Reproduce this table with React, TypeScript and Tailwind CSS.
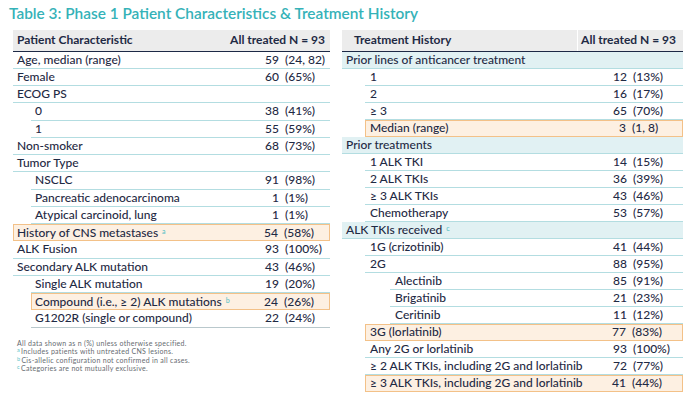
import React from "react";

type Row = {
  label: string;
  n?: string;
  p?: string;
  indent?: 0 | 1 | 2;
  hl?: boolean;
  group?: boolean;
  sup?: string;
};

const leftRows: Row[] = [
  { label: "Age, median (range)", n: "59", p: "(24, 82)" },
  { label: "Female", n: "60", p: "(65%)" },
  { label: "ECOG PS" },
  { label: "0", n: "38", p: "(41%)", indent: 1 },
  { label: "1", n: "55", p: "(59%)", indent: 1 },
  { label: "Non-smoker", n: "68", p: "(73%)" },
  { label: "Tumor Type" },
  { label: "NSCLC", n: "91", p: "(98%)", indent: 1 },
  { label: "Pancreatic adenocarcinoma", n: "1", p: "(1%)", indent: 1 },
  { label: "Atypical carcinoid, lung", n: "1", p: "(1%)", indent: 1 },
  { label: "History of CNS metastases", sup: "a", n: "54", p: "(58%)", hl: true },
  { label: "ALK Fusion", n: "93", p: "(100%)" },
  { label: "Secondary ALK mutation", n: "43", p: "(46%)" },
  { label: "Single ALK mutation", n: "19", p: "(20%)", indent: 1 },
  { label: "Compound (i.e., \u2265 2) ALK mutations", sup: "b", n: "24", p: "(26%)", indent: 1, hl: true },
  { label: "G1202R (single or compound)", n: "22", p: "(24%)", indent: 1 },
];

const rightRows: Row[] = [
  { label: "Prior lines of anticancer treatment", group: true },
  { label: "1", n: "12", p: "(13%)", indent: 1 },
  { label: "2", n: "16", p: "(17%)", indent: 1 },
  { label: "\u2265 3", n: "65", p: "(70%)", indent: 1 },
  { label: "Median (range)", n: "3", p: "(1, 8)", indent: 1, hl: true },
  { label: "Prior treatments", group: true },
  { label: "1 ALK TKI", n: "14", p: "(15%)", indent: 1 },
  { label: "2 ALK TKIs", n: "36", p: "(39%)", indent: 1 },
  { label: "\u2265 3 ALK TKIs", n: "43", p: "(46%)", indent: 1 },
  { label: "Chemotherapy", n: "53", p: "(57%)", indent: 1 },
  { label: "ALK TKIs received", sup: "c", group: true },
  { label: "1G (crizotinib)", n: "41", p: "(44%)", indent: 1 },
  { label: "2G", n: "88", p: "(95%)", indent: 1 },
  { label: "Alectinib", n: "85", p: "(91%)", indent: 2 },
  { label: "Brigatinib", n: "21", p: "(23%)", indent: 2 },
  { label: "Ceritinib", n: "11", p: "(12%)", indent: 2 },
  { label: "3G (lorlatinib)", n: "77", p: "(83%)", indent: 1, hl: true },
  { label: "Any 2G or lorlatinib", n: "93", p: "(100%)", indent: 1 },
  { label: "\u2265 2 ALK TKIs, including 2G and lorlatinib", n: "72", p: "(77%)", indent: 1 },
  { label: "\u2265 3 ALK TKIs, including 2G and lorlatinib", n: "41", p: "(44%)", indent: 1, hl: true },
];

function Sup({ s }: { s?: string }) {
  if (!s) return null;
  return (
    <span className="ml-[4px] text-[7px] leading-[7px] text-[#5cc3c8] relative top-[-3px]">{s}</span>
  );
}

function LeftRow({ r, last }: { r: Row; last: boolean }) {
  const indentCls = r.indent === 1 ? "ml-[18px]" : "ml-0";
  const boxCls = r.hl
    ? "border border-[#f3c188] bg-[#fdf0e2]"
    : last
    ? "border-b border-[#b9c8cc]"
    : "border-b border-[#b3dde1]";
  return (
    <div className={`flex items-center h-[17.25px] ${indentCls} ${boxCls}`}>
      <div className={`flex-1 ${r.hl ? "pl-[3px]" : "pl-[4px]"} whitespace-nowrap`}>
        {r.label}
        <Sup s={r.sup} />
      </div>
      <div className="text-right">{r.n}</div>
      <div className="w-[51px] pl-[6px] whitespace-nowrap">{r.p}</div>
    </div>
  );
}

function RightRow({ r, last }: { r: Row; last: boolean }) {
  const indentCls =
    r.indent === 1 ? "ml-[23px]" : r.indent === 2 ? "ml-[48px]" : "ml-0";
  const boxCls = r.hl
    ? "border border-[#f3c188] bg-[#fdf0e2]"
    : r.group
    ? "border-b border-[#b3dde1] bg-[#e1f1f3]"
    : last
    ? "border-b border-[#b9c8cc]"
    : "border-b border-[#b3dde1]";
  const padCls = r.indent ? (r.hl ? "pl-[4px]" : "pl-[5px]") : "pl-[4px]";
  return (
    <div className={`flex items-center h-[17px] ${indentCls} ${boxCls}`}>
      <div className={`flex-1 ${padCls} whitespace-nowrap`}>
        {r.label}
        <Sup s={r.sup} />
      </div>
      <div className="text-right">{r.n}</div>
      <div className="w-[56px] pl-[6px] whitespace-nowrap">{r.p}</div>
    </div>
  );
}

function FootSup({ s }: { s: string }) {
  return <span className="text-[5.5px] leading-[5px] text-[#5cc3c8] relative top-[-2px] mr-[1px]">{s}</span>;
}

export default function App() {
  return (
    <div
      className="w-[688px] h-[404px] bg-white overflow-hidden text-[#1f2a44]"
      style={{ fontFamily: "Lato, 'Open Sans', sans-serif" }}
    >
      <div className="h-[30px] pl-[9px] pt-[4px] text-[15.4px] leading-[18px] font-semibold text-[#35b2b8] whitespace-nowrap">
        Table 3: Phase 1 Patient Characteristics &amp; Treatment History
      </div>
      <div className="flex pl-[13px] gap-[12px] text-[12px] leading-[14px] font-medium">
        <div className="w-[317px] flex flex-col">
          <div className="flex items-center h-[21.5px] bg-[#ececec] border-b-[1.5px] border-[#1d2946] font-bold">
            <div className="flex-1 pl-[4px]">Patient Characteristic</div>
            <div className="pr-[5px]">All treated N = 93</div>
          </div>
          {leftRows.map((r, i) => (
            <LeftRow key={i} r={r} last={i === leftRows.length - 1} />
          ))}
          <div className="mt-[11px] pl-[4px] text-[7px] leading-[8.5px] tracking-[0.3px] font-normal text-[#666b70] whitespace-nowrap">
            <div className="h-[8.5px]">All data shown as n (%) unless otherwise specified.</div>
            <div className="h-[8.5px]">
              <FootSup s="a" />Includes patients with untreated CNS lesions.
            </div>
            <div className="h-[8.5px]">
              <FootSup s="b" />Cis-allelic configuration not confirmed in all cases.
            </div>
            <div className="h-[8.5px]">
              <FootSup s="c" />Categories are not mutually exclusive.
            </div>
          </div>
        </div>
        <div className="w-[341px] flex flex-col">
          <div className="flex items-center h-[21.5px] bg-[#ececec] border-b-[1.5px] border-[#1d2946] font-bold">
            <div className="flex-1 pl-[12px]">Treatment History</div>
            <div className="w-[106px] h-full flex items-center justify-end pr-[7px] border-l border-white">
              All treated N = 93
            </div>
          </div>
          {rightRows.map((r, i) => (
            <RightRow key={i} r={r} last={i === rightRows.length - 1} />
          ))}
        </div>
      </div>
    </div>
  );
}
